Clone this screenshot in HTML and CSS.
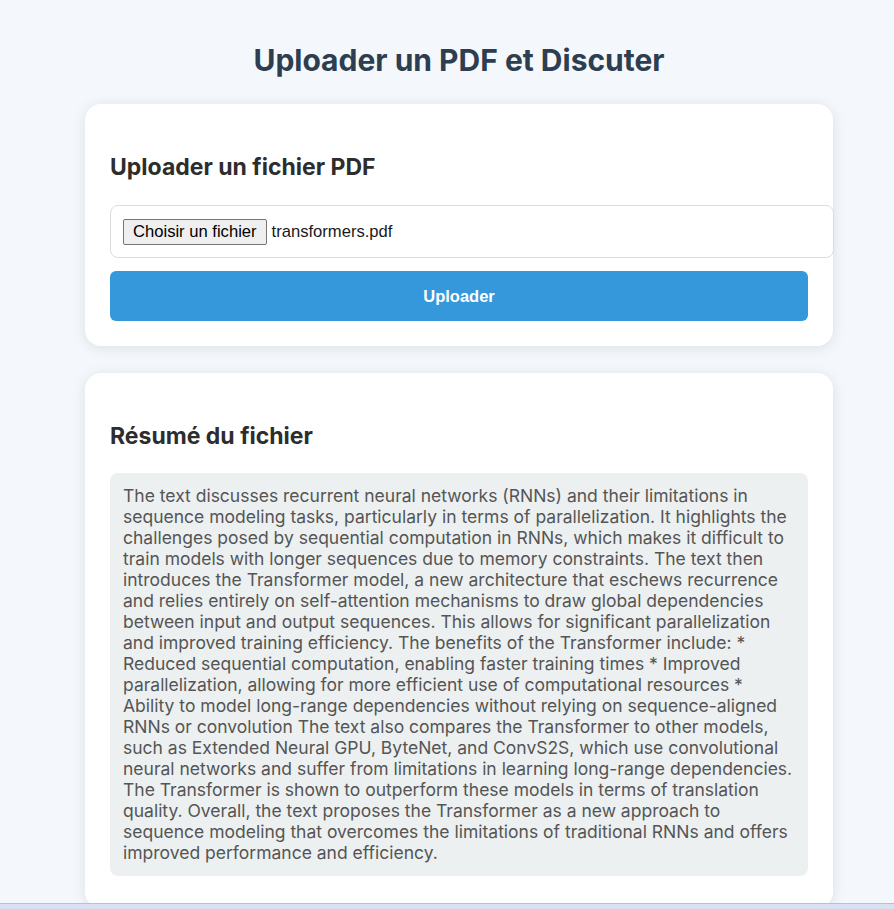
FILE: index.html
```html
<!DOCTYPE html>
<html lang="fr">
<head>
<meta charset="utf-8">
<title>Uploader un PDF et Discuter</title>
<link rel="stylesheet" href="styles.css">
</head>
<body>
<main class="page">
  <h1 class="title">Uploader un PDF et Discuter</h1>
  <section class="card">
    <h2 class="card-title">Uploader un fichier PDF</h2>
    <div class="file-input">
      <span class="file-btn">Choisir un fichier</span>
      <span class="file-name">transformers.pdf</span>
    </div>
    <button class="upload-btn" type="button">Uploader</button>
  </section>
  <section class="card card-summary">
    <h2 class="card-title">Résumé du fichier</h2>
    <div class="summary">The text discusses recurrent neural networks (RNNs) and their limitations in sequence modeling tasks, particularly in terms of parallelization. It highlights the challenges posed by sequential computation in RNNs, which makes it difficult to train models with longer sequences due to memory constraints. The text then introduces the Transformer model, a new architecture that eschews recurrence and relies entirely on self-attention mechanisms to draw global dependencies between input and output sequences. This allows for significant parallelization and improved training efficiency. The benefits of the Transformer include: * Reduced sequential computation, enabling faster training times * Improved parallelization, allowing for more efficient use of computational resources * Ability to model long-range dependencies without relying on sequence-aligned RNNs or convolution The text also compares the Transformer to other models, such as Extended Neural GPU, ByteNet, and ConvS2S, which use convolutional neural networks and suffer from limitations in learning long-range dependencies. The Transformer is shown to outperform these models in terms of translation quality. Overall, the text proposes the Transformer as a new approach to sequence modeling that overcomes the limitations of traditional RNNs and offers improved performance and efficiency.</div>
  </section>
</main>
<div class="bottom-strip"></div>
</body>
</html>
```
FILE: styles.css
```css
html, body {
  margin: 0;
  padding: 0;
}
body {
  background: #f4f7fb;
  font-family: Inter, "Noto Sans", sans-serif;
  color: #333;
}
.page {
  width: 748px;
  margin-left: 85px;
  padding-top: 41px;
}
.title {
  margin: 0 0 24px;
  font-size: 30px;
  font-weight: 700;
  line-height: 39px;
  color: #2c3e50;
  text-align: center;
}
.card {
  background: #fff;
  border-radius: 16px;
  box-shadow: 0 2px 14px rgba(20, 30, 60, 0.1);
  padding: 25px 25px 25px;
  margin-bottom: 27px;
}
.card-summary {
  padding-bottom: 32px;
}
.card-title {
  margin: 24px 0 23px;
  font-size: 23px;
  font-weight: 700;
  line-height: 29px;
  color: #2d2d2d;
}
.card-summary .card-title {
  margin-top: 24px;
  margin-bottom: 22px;
}
.file-input {
  display: flex;
  align-items: center;
  width: 698px;
  height: 27px;
  padding: 12px;
  margin-bottom: 13px;
  border: 1px solid #dcdcdc;
  border-radius: 8px;
  background: #fff;
  font-family: "Liberation Sans", Arial, sans-serif;
  font-size: 16.6px;
  color: #1a1a1a;
}
.file-btn {
  box-sizing: border-box;
  height: 26px;
  padding: 0 9px;
  display: flex;
  align-items: center;
  background: #efefef;
  border: 1px solid #767676;
  border-radius: 2px;
  margin-right: 5px;
  color: #000;
}
.upload-btn {
  display: block;
  width: 698px;
  height: 50px;
  border: none;
  border-radius: 6px;
  background: #3498db;
  color: #fff;
  font-family: "Liberation Sans", Arial, sans-serif;
  font-size: 16.5px;
  font-weight: 700;
}
.summary {
  background: #ecf0f1;
  border-radius: 8px;
  padding: 12px 13px 13px;
  font-size: 17.5px;
  line-height: 21px;
  color: #555;
}
.bottom-strip {
  position: fixed;
  left: 0;
  right: 0;
  bottom: 0;
  height: 5px;
  border-top: 1px solid #b9c0cf;
  background: #d9e1f3;
}
```
